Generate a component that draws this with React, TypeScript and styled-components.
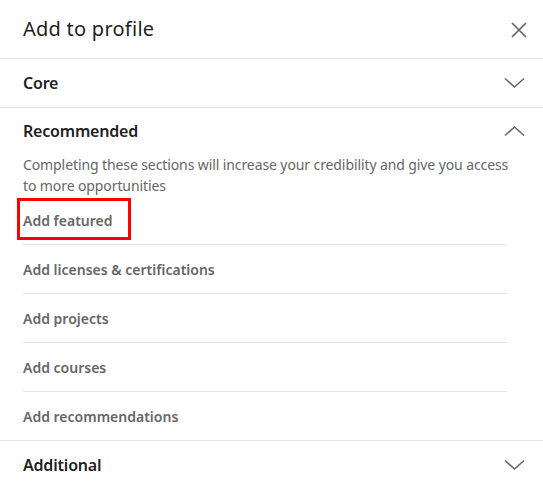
import React from "react";
import styled, { createGlobalStyle } from "styled-components";

const Global = createGlobalStyle`
  html, body { margin: 0; padding: 0; background: #fff; }
  body { font-family: "Noto Sans", "Open Sans", sans-serif; -webkit-font-smoothing: antialiased; }
`;

const Modal = styled.div`
  width: 543px;
  height: 485px;
  overflow: hidden;
  background: #fff;
  display: flex;
  flex-direction: column;
`;

const Header = styled.div`
  height: 59px;
  display: flex;
  align-items: center;
  justify-content: space-between;
  padding: 0 12px 0 23px;
  border-bottom: 1px solid #e6e6e6;
  box-sizing: border-box;
  flex: none;
`;

const Title = styled.h2`
  margin: 0;
  font-size: 20px;
  font-weight: 400;
  color: rgba(0, 0, 0, 0.9);
  letter-spacing: 0.25px;
  margin-top: -2px;
`;

const IconButton = styled.button`
  border: 0;
  background: none;
  padding: 0;
  width: 24px;
  height: 24px;
  display: flex;
  align-items: center;
  justify-content: center;
  color: #666;
  margin-top: 1px;
`;

const Section = styled.section<{ $last?: boolean }>`
  border-bottom: ${(p) => (p.$last ? "none" : "1px solid #e6e6e6")};
  flex: none;
`;

const SectionHead = styled.div<{ $h: number }>`
  height: ${(p) => p.$h}px;
  display: flex;
  align-items: center;
  justify-content: space-between;
  padding: 0 18px 0 23px;
`;

const SectionTitle = styled.h3`
  margin: 0;
  font-size: 16px;
  font-weight: 600;
  color: rgba(0, 0, 0, 0.9);
  letter-spacing: -0.2px;
`;

const Desc = styled.p`
  margin: 0 28px 0 23px;
  font-size: 14px;
  line-height: 21px;
  color: #666;
  letter-spacing: -0.1px;
`;

const List = styled.ul`
  list-style: none;
  margin: 0;
  padding: 0 36px 0 23px;
`;

const Item = styled.li<{ $last?: boolean }>`
  height: 48px;
  display: flex;
  align-items: center;
  border-bottom: ${(p) => (p.$last ? "none" : "1px solid #e6e6e6")};
  font-size: 14px;
  font-weight: 600;
  color: #666;
  letter-spacing: 0;
`;

const Highlight = styled.span`
  position: relative;
  &::after {
    content: "";
    position: absolute;
    left: -6px;
    right: -18px;
    top: -13px;
    bottom: -10px;
    border: 3px solid #f00;
    box-sizing: border-box;
  }
`;

const Chevron = ({ up }: { up?: boolean }) => (
  <svg width="21" height="12" viewBox="0 0 21 12" fill="none">
    <path
      d={up ? "M1 10.5 L10.5 2 L20 10.5" : "M1 1.5 L10.5 10 L20 1.5"}
      stroke="#666"
      strokeWidth="1.6"
    />
  </svg>
);

const CloseIcon = () => (
  <svg width="16" height="16" viewBox="0 0 16 16" fill="none">
    <path d="M1 1 L15 15 M15 1 L1 15" stroke="#666" strokeWidth="1.7" />
  </svg>
);

const items = [
  "Add featured",
  "Add licenses & certifications",
  "Add projects",
  "Add courses",
  "Add recommendations",
];

export default function App() {
  return (
    <>
      <Global />
      <Modal>
        <Header>
          <Title>Add to profile</Title>
          <IconButton aria-label="Dismiss">
            <CloseIcon />
          </IconButton>
        </Header>
        <Section>
          <SectionHead $h={48}>
            <SectionTitle>Core</SectionTitle>
            <Chevron />
          </SectionHead>
        </Section>
        <Section>
          <SectionHead $h={46}>
            <SectionTitle>Recommended</SectionTitle>
            <Chevron up />
          </SectionHead>
          <Desc>
            Completing these sections will increase your credibility and give you access to more opportunities
          </Desc>
          <List>
            {items.map((t, i) => (
              <Item key={t} $last={i === items.length - 1}>
                {i === 0 ? <Highlight>{t}</Highlight> : t}
              </Item>
            ))}
          </List>
        </Section>
        <Section $last>
          <SectionHead $h={48}>
            <SectionTitle>Additional</SectionTitle>
            <Chevron />
          </SectionHead>
        </Section>
      </Modal>
    </>
  );
}
